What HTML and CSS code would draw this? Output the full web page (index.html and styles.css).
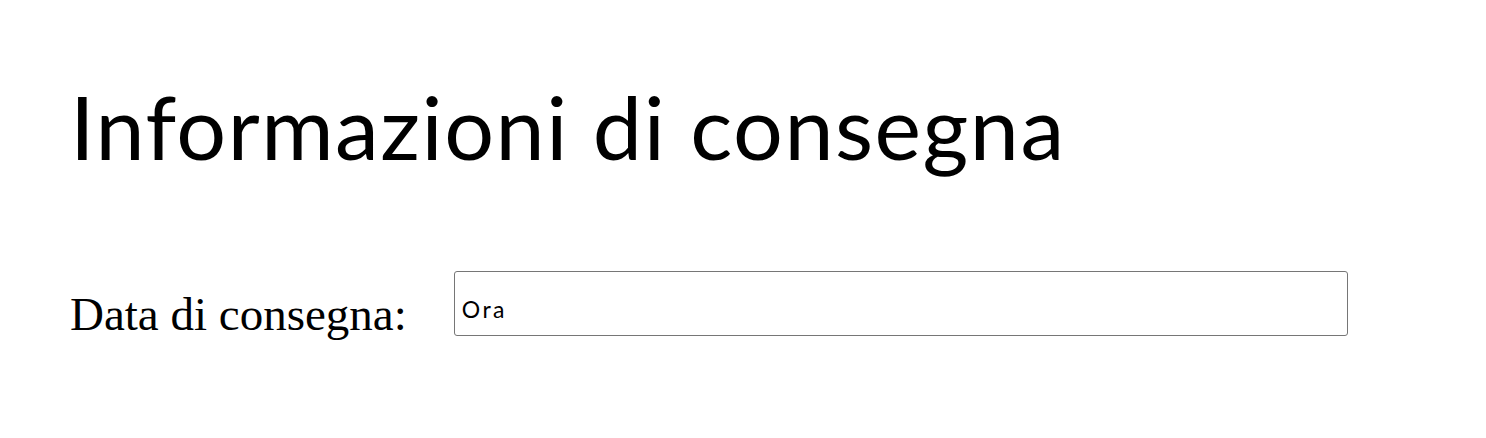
FILE: index.html
```html
<!DOCTYPE html>
<html lang="it">
<head>
<meta charset="utf-8">
<title>Informazioni di consegna</title>
<link rel="stylesheet" href="styles.css">
</head>
<body>
<main class="page">
  <h1 class="title">Informazioni di consegna</h1>
  <form class="form">
    <div class="row">
      <label class="label" for="delivery">Data di consegna:</label>
      <input class="field" id="delivery" type="text" value="Ora">
    </div>
  </form>
</main>
</body>
</html>
```

FILE: styles.css
```css
html, body {
  margin: 0;
  padding: 0;
  background: #ffffff;
}

.page {
  padding: 66px 0 0 70px;
}

.title {
  margin: 0;
  font-family: Lato, "Noto Sans", sans-serif;
  font-weight: 400;
  font-size: 88px;
  line-height: 120px;
  letter-spacing: 1.5px;
  color: #000000;
}

.form {
  margin-top: 85px;
}

.row {
  display: flex;
  align-items: flex-start;
  gap: 47px;
}

.label {
  margin-top: 16px;
  font-family: "Liberation Serif", "Times New Roman", serif;
  font-size: 47px;
  line-height: 54px;
  color: #000000;
}

.field {
  box-sizing: border-box;
  width: 894px;
  height: 65px;
  margin: 0;
  padding: 10px 7px 0;
  border: 1px solid #767676;
  border-radius: 3px;
  background: #ffffff;
  font-family: Lato, "Noto Sans", sans-serif;
  font-size: 23px;
  letter-spacing: 2.5px;
  color: #000000;
  outline: none;
}
```
